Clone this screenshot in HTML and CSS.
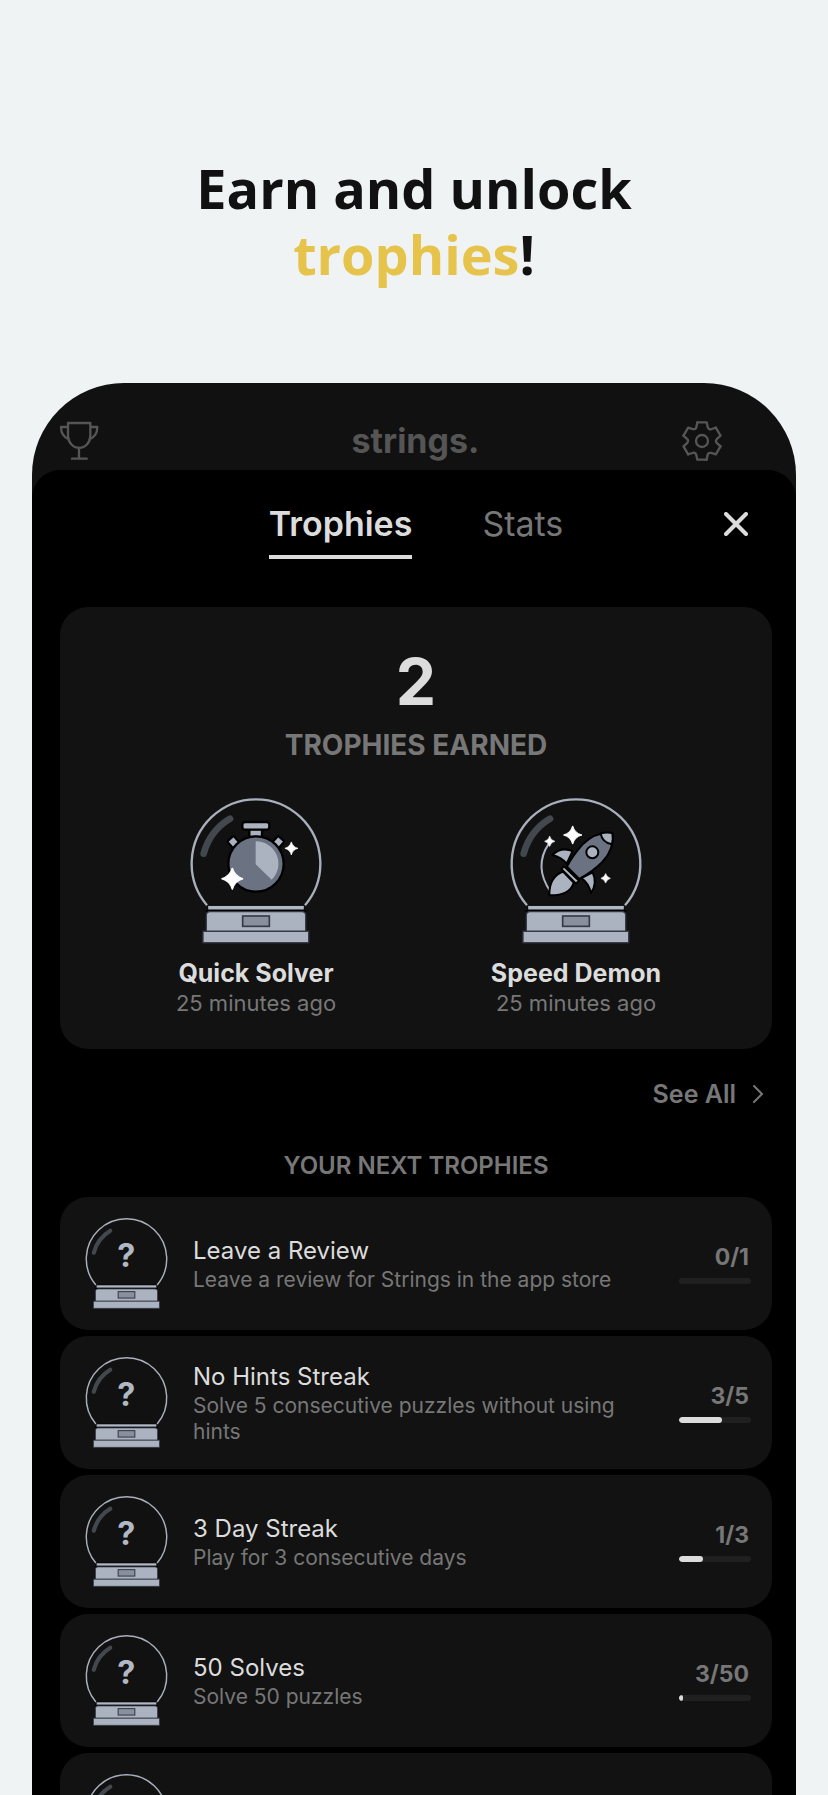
FILE: index.html
```html
<!DOCTYPE html>
<html lang="en">
<head>
<meta charset="utf-8">
<meta name="viewport" content="width=device-width, initial-scale=1">
<title>Strings trophies</title>
<link rel="stylesheet" href="styles.css">
</head>
<body>
<svg class="defs" aria-hidden="true">
  <symbol id="globe" viewBox="54 48 408 444">
    <path d="M111 373A193 193 0 1 1 405 373" fill="#111" stroke="#a9b0bc" stroke-width="7"/>
    <path d="M101 218A176 176 0 0 1 180 113" fill="none" stroke="#43484f" stroke-width="20" stroke-linecap="round"/>
    <path d="M107 389H409" stroke="#000" stroke-width="6"/>
    <rect x="113" y="373" width="290" height="14" rx="3" fill="#b1b8c4" stroke="#000" stroke-width="3"/>
    <path d="M109 451V402Q110 392 120 392H396Q406 392 407 402V451Z" fill="#abb3c0" stroke="#353b49" stroke-width="4"/>
    <rect x="218" y="405" width="80" height="31" fill="#898f9b" stroke="#353b49" stroke-width="5"/>
    <rect x="99" y="451" width="317" height="34" fill="#abb3c0" stroke="#353b49" stroke-width="4"/>
  </symbol>
  <symbol id="star" viewBox="-10 -10 20 20">
    <path d="M0-10Q2-2 10 0Q2 2 0 10Q-2 2-10 0Q-2-2 0-10Z" fill="#fff" stroke="#fff" stroke-width="1" stroke-linejoin="round"/>
  </symbol>
  <symbol id="cog" viewBox="-60 -60 120 120">
    <path id="tooth" d="M-14-56H14L17-42Q21-32 29-36L42-40"/>
    <use href="#tooth" transform="rotate(60)"/>
    <use href="#tooth" transform="rotate(120)"/>
    <use href="#tooth" transform="rotate(180)"/>
    <use href="#tooth" transform="rotate(240)"/>
    <use href="#tooth" transform="rotate(300)"/>
    <circle r="18"/>
  </symbol>
</svg>

<div class="page">
  <h1 class="headline">Earn and unlock<br><span class="accent">trophies</span>!</h1>

  <div class="phone">
    <header class="appbar">
      <button class="icon-btn" aria-label="Trophies">
        <svg class="bar-icon" viewBox="118 152 120 120"><path d="M145 158H212V196A33 36 0 0 1 145 196ZM145 170H124Q124 198 148 207M212 170H233Q233 198 209 207M178 232V265M157 265H201"/></svg>
      </button>
      <div class="brand">strings.</div>
      <button class="icon-btn" aria-label="Settings">
        <svg class="bar-icon"><use href="#cog"/></svg>
      </button>
    </header>

    <main class="sheet">
      <nav class="tabs">
        <div class="tablist" role="tablist">
          <button class="tab active" role="tab" aria-selected="true">Trophies</button>
          <button class="tab" role="tab" aria-selected="false">Stats</button>
        </div>
        <button class="icon-btn close" aria-label="Close">
          <svg class="close-icon" viewBox="0 0 24 24"><path d="M2 2L22 22M22 2L2 22"/></svg>
        </button>
      </nav>

      <section class="earned">
        <div class="total">2</div>
        <h2 class="total-label">TROPHIES EARNED</h2>
        <div class="earned-grid">
          <article class="trophy">
            <svg class="globe-lg" viewBox="54 48 408 444" aria-hidden="true">
              <use href="#globe" x="54" y="48" width="408" height="444"/>
              <g stroke="#000" stroke-width="7">
                <rect x="238" y="144" width="38" height="24" fill="#abb3c0"/>
                <rect x="217" y="123" width="81" height="23" rx="8" fill="#abb3c0"/>
                <rect x="-13" y="-12" width="26" height="28" rx="4" fill="#abb3c0" transform="translate(189 182) rotate(-42)"/>
                <rect x="-13" y="-12" width="26" height="28" rx="4" fill="#abb3c0" transform="translate(326 182) rotate(42)"/>
                <circle cx="258" cy="249" r="83" fill="#6b7383"/>
              </g>
              <path d="M257 181A67 67 0 0 1 305 296L257 250Z" fill="#abb3c0"/>
              <use href="#star" x="154" y="260" width="66" height="66"/>
              <use href="#star" x="344" y="182" width="40" height="40"/>
            </svg>
            <h3 class="trophy-name">Quick Solver</h3>
            <p class="trophy-time">25 minutes ago</p>
          </article>
          <article class="trophy">
            <svg class="globe-lg" viewBox="54 48 408 444" aria-hidden="true">
              <use href="#globe" x="54" y="48" width="408" height="444"/>
              <path d="M177 187Q130 256 181 331" fill="none" stroke="#abb3c0" stroke-width="6"/>
              <g stroke="#000" stroke-width="6" stroke-linejoin="round">
                <path d="M187 222Q213 196 248 210L230 248Q215 229 187 222Z" fill="#abb3c0"/>
                <path d="M274 291L308 274Q323 307 303 336Q296 306 274 291Z" fill="#abb3c0"/>
                <path d="M367 156Q374 203 337 243Q308 272 268 294L231 257Q248 223 278 190Q318 151 367 156Z" fill="#6b7383"/>
                <path d="M332 157Q350 153 367 156Q370 173 366 190Q336 184 332 157Z" fill="#abb3c0"/>
                <circle cx="307" cy="214" r="18" fill="#abb3c0"/>
                <path d="M178 343Q177 288 219 272L251 305Q240 344 178 343Z" fill="#abb3c0"/>
                <path d="M214 264L222 256L267 299L258 308Z" fill="#abb3c0"/>
              </g>
              <use href="#star" x="220" y="134" width="56" height="56"/>
              <use href="#star" x="163" y="165" width="32" height="32"/>
              <use href="#star" x="332" y="277" width="30" height="30"/>
            </svg>
            <h3 class="trophy-name">Speed Demon</h3>
            <p class="trophy-time">25 minutes ago</p>
          </article>
        </div>
      </section>

      <a class="see-all" href="#all">See All
        <svg class="chevron" viewBox="0 0 12 20"><path d="M2 2L10 10L2 18"/></svg>
      </a>

      <h2 class="next-title">YOUR NEXT TROPHIES</h2>
      <ul class="next-list">
        <li class="row">
          <svg class="globe-sm" viewBox="54 48 408 444"><use href="#globe" x="54" y="48" width="408" height="444"/><text class="mystery" x="257" y="288" text-anchor="middle">?</text></svg>
          <div class="info"><h3 class="row-name">Leave a Review</h3><p class="row-desc">Leave a review for Strings in the app store</p></div>
          <div class="status"><label class="count" for="p1">0/1</label><progress class="meter" id="p1" value="0" max="1"></progress></div>
        </li>
        <li class="row">
          <svg class="globe-sm" viewBox="54 48 408 444"><use href="#globe" x="54" y="48" width="408" height="444"/><text class="mystery" x="257" y="288" text-anchor="middle">?</text></svg>
          <div class="info"><h3 class="row-name">No Hints Streak</h3><p class="row-desc">Solve 5 consecutive puzzles without using hints</p></div>
          <div class="status"><label class="count" for="p2">3/5</label><progress class="meter" id="p2" value="3" max="5"></progress></div>
        </li>
        <li class="row">
          <svg class="globe-sm" viewBox="54 48 408 444"><use href="#globe" x="54" y="48" width="408" height="444"/><text class="mystery" x="257" y="288" text-anchor="middle">?</text></svg>
          <div class="info"><h3 class="row-name">3 Day Streak</h3><p class="row-desc">Play for 3 consecutive days</p></div>
          <div class="status"><label class="count" for="p3">1/3</label><progress class="meter" id="p3" value="1" max="3"></progress></div>
        </li>
        <li class="row">
          <svg class="globe-sm" viewBox="54 48 408 444"><use href="#globe" x="54" y="48" width="408" height="444"/><text class="mystery" x="257" y="288" text-anchor="middle">?</text></svg>
          <div class="info"><h3 class="row-name">50 Solves</h3><p class="row-desc">Solve 50 puzzles</p></div>
          <div class="status"><label class="count" for="p4">3/50</label><progress class="meter" id="p4" value="3" max="50"></progress></div>
        </li>
        <li class="row">
          <svg class="globe-sm" viewBox="54 48 408 444"><use href="#globe" x="54" y="48" width="408" height="444"/></svg>
        </li>
      </ul>
    </main>
  </div>
</div>
</body>
</html>
```

FILE: styles.css
```css
* { box-sizing: border-box; margin: 0; padding: 0; }

body {
  background: #eff3f4;
  color: #dcdcdc;
  font-family: Inter, "Liberation Sans", sans-serif;
}

button {
  background: none;
  border: 0;
  color: inherit;
  font: inherit;
  cursor: pointer;
}

.defs { position: absolute; width: 0; height: 0; }

.page {
  display: flex;
  flex-direction: column;
  height: 100vh;
  padding: 155px 32px 0;
  overflow: hidden;
}

.headline {
  color: #111;
  font-family: "Open Sans", Lato, sans-serif;
  font-size: 54px;
  font-weight: 700;
  line-height: 66px;
  text-align: center;
}
.accent { color: #e6c34a; }

.phone {
  flex: 1 0 auto;
  margin-top: 96px;
  border-radius: 92px 92px 0 0;
  background: #111;
  overflow: hidden;
}

.appbar {
  display: grid;
  grid-template-columns: 40px 1fr 40px;
  align-items: center;
  height: 87px;
  padding: 28px 74px 0 27px;
  color: #555;
}
.brand {
  padding-left: 50px;
  font-size: 34px;
  font-weight: 700;
  line-height: 40px;
  text-align: center;
}
.icon-btn { display: flex; }
.bar-icon {
  flex: none;
  width: 40px;
  height: 40px;
  fill: none;
  stroke: #555;
  stroke-width: 7;
  stroke-linejoin: round;
  stroke-linecap: round;
}

.sheet {
  padding: 0 24px 0 28px;
  border-radius: 28px 28px 0 0;
  background: #000;
}

.tabs {
  display: grid;
  grid-template-columns: 1fr auto 1fr;
  align-items: start;
  padding-top: 34px;
}
.tablist { display: flex; grid-column: 2; gap: 70px; }
.tab {
  padding-bottom: 11px;
  border-bottom: 4px solid transparent;
  color: #777;
  font-size: 34px;
  line-height: 40px;
}
.tab.active { border-color: #dcdcdc; color: #dcdcdc; font-weight: 600; }
.close { justify-self: end; padding: 8px 24px; }
.close-icon { width: 24px; height: 24px; fill: none; stroke: #dcdcdc; stroke-width: 4; stroke-linecap: round; }

.earned {
  margin-top: 48px;
  padding: 36px 36px 32px;
  border-radius: 28px;
  background: #121212;
  text-align: center;
}
.total { font-size: 64px; font-weight: 700; line-height: 78px; }
.total-label { padding-top: 6px; color: #777; font-size: 28px; font-weight: 700; line-height: 36px; }
.earned-grid { display: grid; grid-template-columns: 1fr 1fr; margin-top: 34px; }
.trophy { display: flex; flex-direction: column; align-items: center; }
.globe-lg { width: 136px; height: 148px; }
.trophy-name { margin-top: 12px; font-size: 25px; font-weight: 700; line-height: 32px; }
.trophy-time { color: #777; font-size: 22px; line-height: 28px; }

.see-all {
  display: flex;
  align-items: center;
  justify-content: flex-end;
  gap: 16px;
  margin-top: 30px;
  padding-right: 8px;
  color: #777;
  font-size: 25px;
  font-weight: 600;
  line-height: 30px;
  text-decoration: none;
}
.chevron { width: 12px; height: 20px; fill: none; stroke: #777; stroke-width: 2; stroke-linecap: round; }

.next-title {
  margin-top: 42px;
  color: #777;
  font-size: 24px;
  font-weight: 600;
  line-height: 30px;
  text-align: center;
}
.next-list {
  display: flex;
  flex-direction: column;
  gap: 6px;
  margin-top: 16px;
  list-style: none;
}
.row {
  display: flex;
  align-items: center;
  gap: 24px;
  padding: 20px 21px 20px 24px;
  border-radius: 28px;
  background: #121212;
}
.globe-sm { flex: none; width: 85px; height: 93px; }
.mystery { fill: #b1b8c4; font-family: Inter, sans-serif; font-size: 155px; font-weight: 700; }
.info { flex: 1; min-width: 0; }
.row-name { font-size: 24px; font-weight: 400; line-height: 32px; }
.row-desc { color: #777; font-size: 21px; line-height: 26px; }
.status { display: flex; flex-direction: column; gap: 7px; width: 72px; }
.count {
  padding-right: 2px;
  color: #777;
  font-size: 23px;
  font-weight: 700;
  line-height: 28px;
  text-align: right;
}
.meter {
  display: block;
  width: 100%;
  height: 6px;
  border: 0;
  border-radius: 3px;
  background: #202020;
  appearance: none;
  overflow: hidden;
}
.meter::-webkit-progress-bar { background: #202020; }
.meter::-webkit-progress-value { border-radius: 3px; background: #dcdcdc; }
```
